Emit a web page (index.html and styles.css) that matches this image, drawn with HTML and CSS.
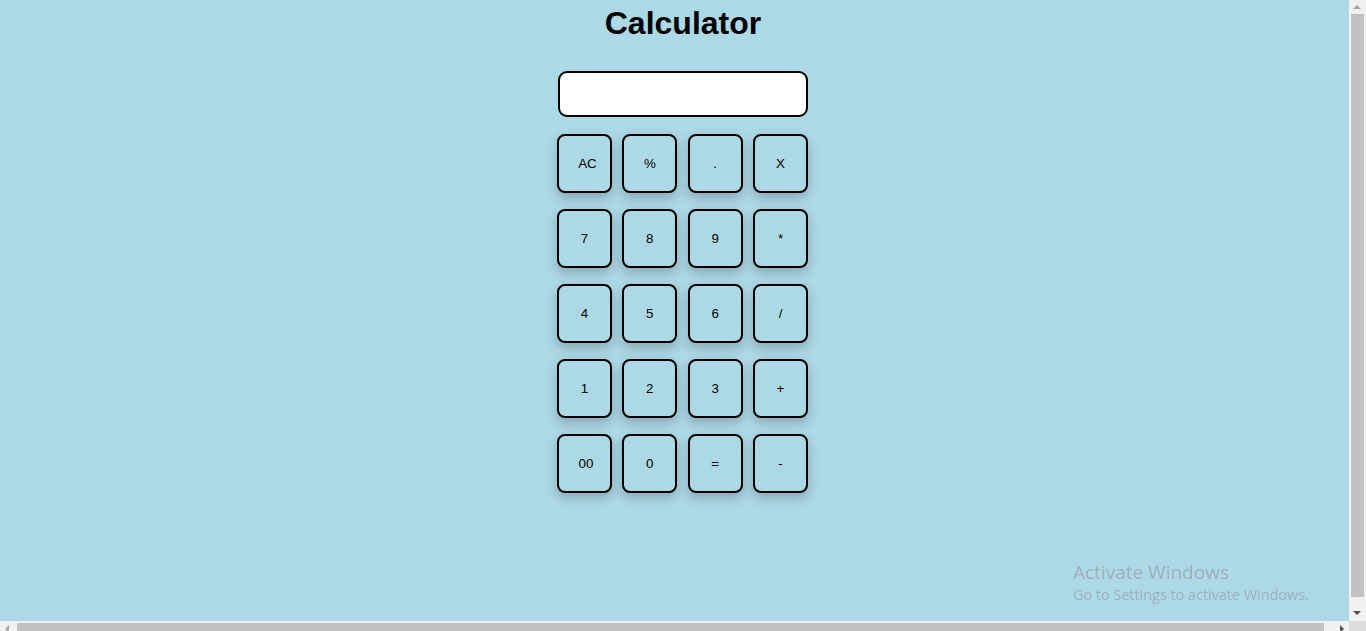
FILE: index.html
```html
<!DOCTYPE html>
<html lang="en">
<head>
<meta charset="utf-8">
<title>Calculator</title>
<link rel="stylesheet" href="styles.css">
</head>
<body>
<main class="app">
  <h1 class="title">Calculator</h1>
  <div class="calc">
    <input class="display" type="text" value="" aria-label="display">
    <div class="keys">
      <button class="key key-ac">AC</button>
      <button class="key">%</button>
      <button class="key">.</button>
      <button class="key">X</button>
      <button class="key">7</button>
      <button class="key">8</button>
      <button class="key">9</button>
      <button class="key">*</button>
      <button class="key">4</button>
      <button class="key">5</button>
      <button class="key">6</button>
      <button class="key">/</button>
      <button class="key">1</button>
      <button class="key">2</button>
      <button class="key">3</button>
      <button class="key">+</button>
      <button class="key key-00">00</button>
      <button class="key">0</button>
      <button class="key">=</button>
      <button class="key">-</button>
    </div>
  </div>
</main>

<div class="watermark">
  <div class="wm-title">Activate Windows</div>
  <div class="wm-sub">Go to Settings to activate Windows.</div>
</div>

<div class="vscroll">
  <span class="arrow arrow-up"></span>
  <span class="vthumb"></span>
  <span class="arrow arrow-down"></span>
</div>
<div class="hscroll">
  <span class="arrow arrow-left"></span>
  <span class="hthumb"></span>
  <span class="arrow arrow-right"></span>
</div>
<div class="corner"></div>
</body>
</html>
```

FILE: styles.css
```css
html, body {
  margin: 0;
  padding: 0;
  height: 100%;
  overflow: hidden;
}

body {
  background: #add8e6;
  font-family: "Liberation Sans", Arial, sans-serif;
}

.app {
  display: flex;
  flex-direction: column;
  align-items: center;
  padding-top: 5px;
}

.title {
  margin: 0;
  font-size: 32px;
  font-weight: bold;
  line-height: 37px;
  color: #000;
}

.calc {
  display: flex;
  flex-direction: column;
  align-items: center;
  margin-top: 29px;
  gap: 17px;
}

.display {
  box-sizing: border-box;
  width: 250px;
  height: 46px;
  border: 2px solid #000;
  border-radius: 9px;
  background: #fff;
  margin: 0;
  padding: 0 8px;
  font-family: "Liberation Sans", Arial, sans-serif;
  font-size: 18px;
  outline: none;
}

.keys {
  display: grid;
  grid-template-columns: repeat(4, 55px);
  grid-auto-rows: 59px;
  column-gap: 10.333px;
  row-gap: 16px;
  margin-right: 1px;
}

.key {
  box-sizing: border-box;
  margin: 0;
  padding: 0;
  border: 2px solid #000;
  border-radius: 8px;
  background: #add8e6;
  color: #000;
  font-family: "Liberation Sans", Arial, sans-serif;
  font-size: 13.333px;
  box-shadow: 0 5px 12px rgba(0, 0, 0, 0.22);
  cursor: pointer;
}

.key-ac {
  padding-left: 6px;
}

.key-00 {
  padding-left: 3px;
}

/* Windows activation watermark overlay */
.watermark {
  position: fixed;
  left: 1073px;
  top: 559px;
  color: #9cb2ba;
  font-family: "Open Sans", "Noto Sans", sans-serif;
  pointer-events: none;
}

.wm-title {
  font-size: 19px;
  line-height: 26px;
}

.wm-sub {
  font-size: 14.4px;
  line-height: 20px;
}

/* Fake classic scrollbars */
.vscroll {
  position: fixed;
  right: 0;
  top: 0;
  width: 17px;
  height: 621px;
  background: #f1f1f1;
}

.vthumb {
  position: absolute;
  left: 2px;
  top: 14px;
  width: 13px;
  height: 583px;
  background: #c1c1c1;
}

.hscroll {
  position: fixed;
  left: 0;
  top: 621px;
  width: 1349px;
  height: 17px;
  background: #f1f1f1;
}

.hthumb {
  position: absolute;
  left: 17px;
  top: 2px;
  width: 1307px;
  height: 13px;
  background: #c1c1c1;
}

.corner {
  position: fixed;
  left: 1349px;
  top: 621px;
  width: 17px;
  height: 17px;
  background: #dcdcdc;
}

.arrow {
  position: absolute;
  width: 0;
  height: 0;
  border-style: solid;
}

.arrow-up {
  left: 4px;
  top: 5px;
  border-width: 0 4px 4px 4px;
  border-color: transparent transparent #a3a3a3 transparent;
}

.arrow-down {
  left: 4px;
  bottom: 6px;
  border-width: 4px 4px 0 4px;
  border-color: #505050 transparent transparent transparent;
}

.arrow-left {
  left: 5px;
  top: 4px;
  border-width: 4px 4px 4px 0;
  border-color: transparent #a3a3a3 transparent transparent;
}

.arrow-right {
  right: 5px;
  top: 4px;
  border-width: 4px 0 4px 4px;
  border-color: transparent transparent transparent #505050;
}
```
